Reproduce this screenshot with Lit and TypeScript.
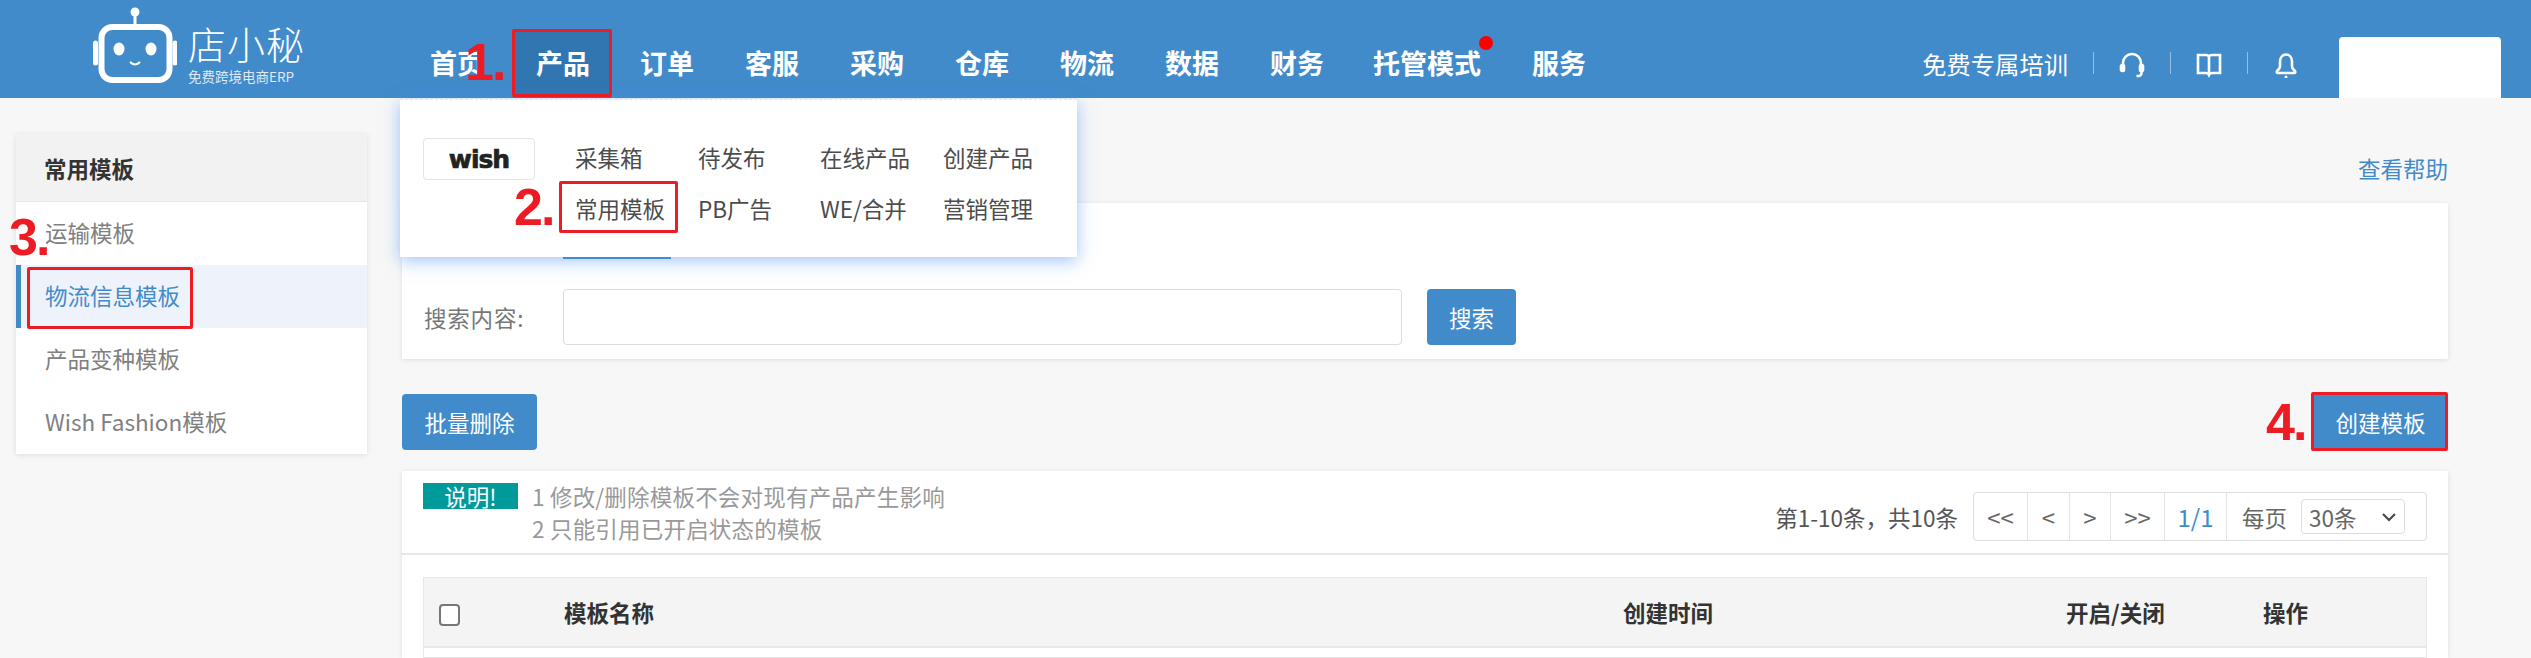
import { LitElement, html, css } from "lit";
import { customElement } from "lit/decorators.js";

const NAV = ["首页", "产品", "订单", "客服", "采购", "仓库", "物流", "数据", "财务", "托管模式", "服务"];
const MENU = ["采集箱", "待发布", "在线产品", "创建产品", "常用模板", "PB广告", "WE/合并", "营销管理"];
const SIDE = ["运输模板", "物流信息模板", "产品变种模板", "Wish Fashion模板"];

@customElement("app-root")
export class AppRoot extends LitElement {
  static styles = css`
    :host {
      display: block;
      position: relative;
      width: 2531px;
      height: 658px;
      overflow: hidden;
      background: #f7f7f7;
      font-family: "Noto Sans CJK SC", "Noto Sans", sans-serif;
      font-size: 22.5px;
      color: #555;
    }
    * { box-sizing: border-box; }

    .header {
      display: flex;
      height: 98px;
      background: #428bca;
      color: #fff;
    }
    .logo {
      display: flex;
      width: 405px;
      padding: 7px 0 0 93px;
      gap: 11px;
    }
    .logo svg { width: 84px; height: 76px; flex: none; }
    .logo-text { display: flex; flex-direction: column; padding-top: 13px; }
    .logo-name { font-size: 38px; font-weight: 300; line-height: 46px; letter-spacing: 1px; white-space: nowrap; }
    .logo-sub { font-size: 13.5px; line-height: 18px; opacity: .82; white-space: nowrap; margin-top: 1px; }

    .nav { display: flex; align-self: flex-end; height: 69px; }
    .nav-item {
      position: relative;
      display: flex;
      align-items: center;
      padding: 0 25px 3px 25px;
      margin-right: 1px;
      font-size: 27px;
      font-weight: 700;
      white-space: nowrap;
    }
    .nav-item.active {
      background: #3276b1;
      margin-left: 3px;
      margin-right: 4px;
      padding: 0 21px 3px 23px;
    }
    .nav-item.wide { margin-left: -2px; }
    .dot {
      position: absolute;
      right: 13px;
      top: 7px;
      width: 14px;
      height: 14px;
      border-radius: 50%;
      background: #f00;
    }

    .tools {
      margin-left: auto;
      display: flex;
      align-items: flex-start;
      padding: 52px 30px 0 0;
    }
    .train { font-size: 24.3px; line-height: 24px; white-space: nowrap; margin-right: 25px; }
    .tool {
      display: flex;
      justify-content: center;
      width: 77px;
      height: 22px;
      border-left: 1px solid rgba(255, 255, 255, .45);
    }
    .tool svg { width: 26px; height: 26px; flex: none; }
    .account {
      width: 162px;
      height: 61px;
      margin-top: -15px;
      margin-left: 15px;
      background: #fff;
      border-radius: 4px 4px 0 0;
    }

    .page {
      display: flex;
      gap: 35px;
      height: 560px;
      padding: 36px 83px 0 16px;
    }
    .side {
      flex: none;
      align-self: flex-start;
      width: 351px;
      background: #fff;
      box-shadow: 0 1px 6px rgba(0, 0, 0, .1);
    }
    .side-title {
      display: flex;
      align-items: center;
      height: 68px;
      padding-left: 28px;
      background: #f2f2f2;
      border-bottom: 1px solid #e8e8e8;
      font-weight: 700;
      color: #333;
    }
    .side-item {
      display: flex;
      align-items: center;
      height: 63px;
      color: #808080;
      border-left: 5px solid transparent;
      padding: 0 0 3px 24px;
    }
    .side-item.active { background: #eef2fb; color: #428bca; border-left-color: #428bca; }

    .main { flex: 1; min-width: 0; display: flex; flex-direction: column; }
    .help {
      display: flex;
      justify-content: flex-end;
      align-items: center;
      height: 69px;
      padding-bottom: 2px;
      color: #428bca;
    }
    .panel {
      background: #fff;
      height: 156px;
      box-shadow: 0 1px 5px rgba(0, 0, 0, .1);
    }
    .tabs { height: 56px; padding-left: 161px; }
    .tab { width: 108px; height: 56px; border-bottom: 3px solid #428bca; }
    .search { display: flex; align-items: center; margin-top: 30px; padding-left: 22px; }
    .search label { width: 139px; color: #777; letter-spacing: .8px; }
    .input {
      width: 839px;
      height: 56px;
      background: #fff;
      border: 1px solid #ddd;
      border-radius: 4px;
    }
    .btn {
      display: flex;
      align-items: center;
      justify-content: center;
      height: 56px;
      background: #428bca;
      color: #fff;
      border-radius: 4px;
      white-space: nowrap;
    }
    .search .btn { width: 89px; margin-left: 25px; }
    .actions { display: flex; justify-content: space-between; margin-top: 35px; }
    .actions .btn { width: 135px; }
    .card {
      flex: 1;
      display: flex;
      flex-direction: column;
      margin-top: 21px;
      background: #fff;
      box-shadow: 0 1px 5px rgba(0, 0, 0, .1);
    }
    .card-head {
      display: flex;
      align-items: flex-start;
      flex: none;
      height: 84px;
      padding: 9px 21px 0;
      border-bottom: 2px solid #e8e8e8;
    }
    .badge {
      display: flex;
      align-items: center;
      justify-content: center;
      width: 95px;
      height: 26px;
      margin-top: 3px;
      background: #009a9a;
      color: #fff;
    }
    .notes { margin-left: 14px; line-height: 32px; color: #999; white-space: nowrap; letter-spacing: .2px; }
    .pager-wrap { margin-left: auto; display: flex; align-items: center; margin-top: 12px; }
    .range { margin-right: 15px; color: #555; white-space: nowrap; }
    .pager {
      display: flex;
      height: 49px;
      border: 1px solid #ddd;
      border-radius: 4px;
      color: #666;
    }
    .cell {
      display: flex;
      align-items: center;
      justify-content: center;
      border-right: 1px solid #e4e4e4;
      font-size: 24px;
    }
    .w54 { width: 54px; }
    .w42 { width: 42px; }
    .w41 { width: 41px; }
    .w62 { width: 62px; color: #428bca; }
    .per { display: flex; align-items: center; width: 199px; padding-left: 15px; white-space: nowrap; }
    .select {
      display: flex;
      align-items: center;
      justify-content: space-between;
      width: 104px;
      height: 35px;
      margin-left: 14px;
      padding: 0 7px;
      border: 1px solid #ddd;
      border-radius: 4px;
    }
    .select svg { width: 16px; height: 10px; }

    .table {
      flex: 1;
      margin: 22px 21px 0;
      border: 1px solid #e8e8e8;
    }
    .thead {
      display: grid;
      grid-template-columns: 140px 1059px 443px 197px 1fr;
      align-items: center;
      height: 70px;
      background: #f4f4f4;
      border-bottom: 2px solid #e8e8e8;
      color: #333;
      font-weight: 700;
    }
    .check {
      width: 21px;
      height: 22px;
      margin: 5px 0 0 15px;
      background: #fff;
      border: 2px solid #777;
      border-radius: 4px;
    }

    .dropdown {
      position: absolute;
      left: 400px;
      top: 99px;
      width: 677px;
      height: 158px;
      padding: 38px 0 0 23px;
      display: flex;
      background: #fff;
      border-top: 1px dashed #e6e6e6;
      box-shadow: 0 4px 16px rgba(66, 139, 250, .5);
      color: #4c4c4c;
    }
    .wish {
      display: flex;
      flex: none;
      align-items: center;
      justify-content: center;
      width: 112px;
      height: 42px;
      border: 1px solid #e2e2e8;
      border-radius: 4px;
      font-family: "DejaVu Sans", sans-serif;
      font-size: 25px;
      font-weight: 700;
      letter-spacing: -1px;
      -webkit-text-stroke: .7px #222;
      color: #222;
    }
    .menu {
      display: grid;
      grid-template-columns: 123px 122px 123px auto;
      grid-auto-rows: 51px;
      margin: 1px 0 0 40px;
      white-space: nowrap;
    }
    .menu div { display: flex; align-items: center; height: 36px; line-height: 36px; }

    .box { position: absolute; border: 3px solid #ed1c24; border-radius: 2px; }
    .b1 { left: 512px; top: 29px; width: 100px; height: 68px; }
    .b2 { left: 559px; top: 181px; width: 119px; height: 52px; }
    .b3 { left: 27px; top: 267px; width: 166px; height: 62px; }
    .b4 { left: 2311px; top: 392px; width: 137px; height: 59px; }

    .num {
      position: absolute;
      font-family: "Liberation Sans", sans-serif;
      font-size: 52px;
      line-height: 52px;
      font-weight: 700;
      letter-spacing: -2px;
      color: #ed1c24;
    }
    .n1 { left: 465px; top: 36px; }
    .n2 { left: 514px; top: 181px; }
    .n3 { left: 9px; top: 211px; }
    .n4 { left: 2266px; top: 396px; }
  `;

  render() {
    return html`
      <div class="header">
        <div class="logo">
          <svg viewBox="0 0 84 76" fill="none" stroke="#fff">
            <rect x="8.5" y="20" width="68" height="53" rx="11" stroke-width="6"></rect>
            <path d="M2.500 36v20M82 36v20" stroke-width="5" stroke-linecap="round"></path>
            <path d="M42 6v14" stroke-width="3"></path>
            <circle cx="42" cy="5" r="4.500" fill="#fff" stroke="none"></circle>
            <ellipse cx="26" cy="42" rx="5.500" ry="6.500" fill="#fff" stroke="none"></ellipse>
            <ellipse cx="58" cy="42" rx="5.500" ry="6.500" fill="#fff" stroke="none"></ellipse>
            <path d="M37 55q5 5 10 0" stroke-width="2"></path>
          </svg>
          <div class="logo-text">
            <div class="logo-name">店小秘</div>
            <div class="logo-sub">免费跨境电商ERP</div>
          </div>
        </div>
        <div class="nav">
          ${NAV.map(
            (n) => html`<div class="nav-item ${n === "产品" ? "active" : ""} ${n === "托管模式" ? "wide" : ""}">
              ${n}${n === "托管模式" ? html`<span class="dot"></span>` : ""}
            </div>`
          )}
        </div>
        <div class="tools">
          <div class="train">免费专属培训</div>
          <div class="tool">
            <svg viewBox="0 0 26 26" fill="none" stroke="#fff" stroke-width="2.600">
              <path d="M4 14v-3a9 9 0 0 1 18 0v3"></path>
              <rect x="2" y="13" width="3" height="6" rx="1.200" fill="#fff"></rect>
              <rect x="21" y="13" width="3" height="6" rx="1.200" fill="#fff"></rect>
              <path d="M22.500 19v2a3 3 0 0 1-3 3h-2"></path>
            </svg>
          </div>
          <div class="tool">
            <svg viewBox="0 0 26 26" fill="none" stroke="#fff" stroke-width="2.600">
              <path d="M2 3h8q3 0 3 2.500q0-2.500 3-2.500h8v18h-8q-2 0-3 2q-1-2-3-2h-8zM13 5.500v15.500"></path>
            </svg>
          </div>
          <div class="tool">
            <svg viewBox="0 0 26 26" fill="none" stroke="#fff" stroke-width="2.600">
              <path d="M13 2.500c-3.500 0-6 3-6 7v5c0 2-1.500 3-3 4.500q-1 2 1 2h16q2 0 1-2c-1.500-1.500-3-2.500-3-4.500v-5c0-4-2.500-7-6-7z"></path>
              <circle cx="13" cy="25" r="1.500" fill="#fff" stroke="none"></circle>
            </svg>
          </div>
          <div class="account"></div>
        </div>
      </div>

      <div class="page">
        <div class="side">
          <div class="side-title">常用模板</div>
          ${SIDE.map(
            (s) => html`<div class="side-item ${s === "物流信息模板" ? "active" : ""}">${s}</div>`
          )}
        </div>
        <div class="main">
          <div class="help">查看帮助</div>
          <div class="panel">
            <div class="tabs"><div class="tab"></div></div>
            <div class="search">
              <label>搜索内容:</label>
              <div class="input"></div>
              <div class="btn">搜索</div>
            </div>
          </div>
          <div class="actions">
            <div class="btn">批量删除</div>
            <div class="btn">创建模板</div>
          </div>
          <div class="card">
            <div class="card-head">
              <div class="badge">说明!</div>
              <div class="notes">
                <div>1 修改/删除模板不会对现有产品产生影响</div>
                <div>2 只能引用已开启状态的模板</div>
              </div>
              <div class="pager-wrap">
                <div class="range">第1-10条，共10条</div>
                <div class="pager">
                  <div class="cell w54">&lt;&lt;</div>
                  <div class="cell w42">&lt;</div>
                  <div class="cell w41">&gt;</div>
                  <div class="cell w54">&gt;&gt;</div>
                  <div class="cell w62">1/1</div>
                  <div class="per">
                    每页
                    <div class="select">
                      <span>30条</span>
                      <svg viewBox="0 0 16 10" fill="none" stroke="#444" stroke-width="2">
                        <path d="M2 2l6 6 6-6"></path>
                      </svg>
                    </div>
                  </div>
                </div>
              </div>
            </div>
            <div class="table">
              <div class="thead">
                <div><div class="check"></div></div>
                <div>模板名称</div>
                <div>创建时间</div>
                <div>开启/关闭</div>
                <div>操作</div>
              </div>
            </div>
          </div>
        </div>
      </div>

      <div class="dropdown">
        <div class="wish">wish</div>
        <div class="menu">${MENU.map((m) => html`<div>${m}</div>`)}</div>
      </div>

      <div class="box b1"></div>
      <div class="box b2"></div>
      <div class="box b3"></div>
      <div class="box b4"></div>
      <div class="num n1">1.</div>
      <div class="num n2">2.</div>
      <div class="num n3">3.</div>
      <div class="num n4">4.</div>
    `;
  }
}
